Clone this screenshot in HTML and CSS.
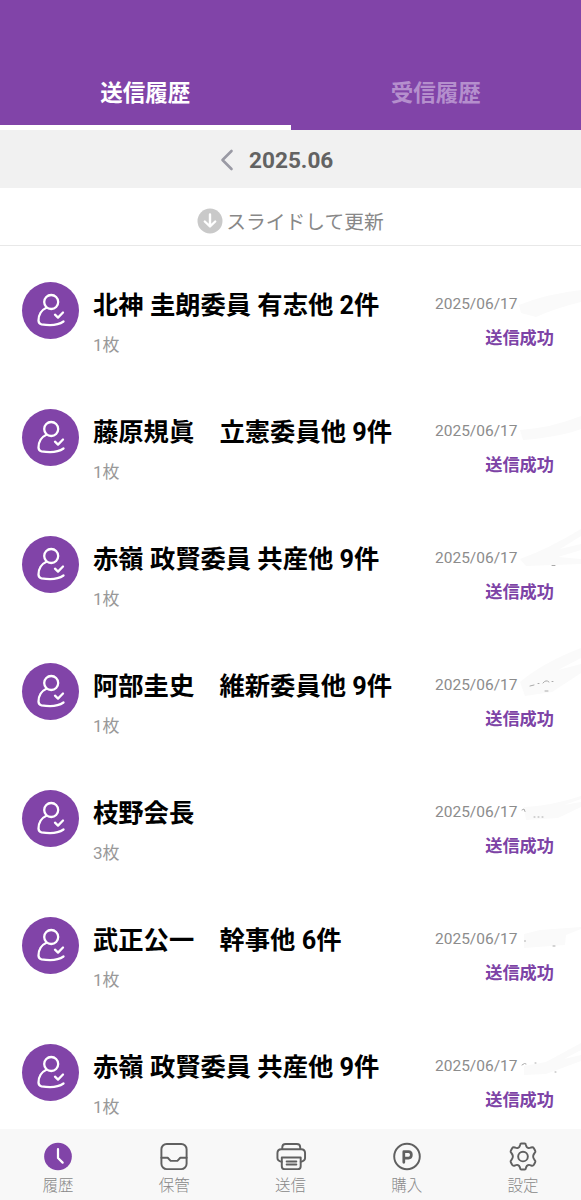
FILE: index.html
```html
<!DOCTYPE html>
<html lang="ja">
  <head>
    <meta charset="utf-8">
    <title>送信履歴</title>
    <link rel="stylesheet" href="styles.css">
  </head>
  <body>
    <svg class="defs">
      <symbol id="icon-user" viewBox="0 0 57 57">
        <circle cx="29.200" cy="20" r="7" />
        <path d="M24 26C19.500 28 16.500 33 16.500 38.500Q16.500 41.700 19.500 42.300C28 43.800 36 43.300 41.500 39.500" />
        <path d="M33 32.700L36 35.600L41 30.500" />
      </symbol>
    </svg>

    <header class="tabs">
      <div class="tab active">送信履歴</div>
      <div class="tab">受信履歴</div>
    </header>

    <div class="month-bar">
      <svg class="prev" viewBox="0 0 14 22"><path d="M11.500 2L2.500 11L11.500 20" /></svg>
      <span class="month">2025.06</span>
    </div>

    <div class="refresh">
      <svg class="refresh-icon" viewBox="0 0 26 26">
        <circle cx="13" cy="13" r="12.500" />
        <path d="M13 6.500V18M7.800 13.500L13 18.500L18.200 13.500" />
      </svg>
      <span>スライドして更新</span>
    </div>

    <main class="list">
      <div class="item">
        <svg class="avatar"><use href="#icon-user" /></svg>
        <div class="info">
          <div class="name">北神 圭朗委員 有志他 2件</div>
          <div class="pages">1枚</div>
        </div>
        <div class="status">
          <div class="date">2025/06/17</div>
          <div class="result">送信成功</div>
        </div>
        <svg class="smudge" viewBox="0 0 65 60"><path d="M3 28Q30 17 65 13V25Q40 31 20 40L5 36Z" /></svg>
      </div>
      <div class="item">
        <svg class="avatar"><use href="#icon-user" /></svg>
        <div class="info">
          <div class="name">藤原規眞　立憲委員他 9件</div>
          <div class="pages">1枚</div>
        </div>
        <div class="status">
          <div class="date">2025/06/17</div>
          <div class="result">送信成功</div>
        </div>
        <svg class="smudge" viewBox="0 0 65 60"><path d="M4 26Q35 24 65 12V25Q44 33 7 36Z" /></svg>
      </div>
      <div class="item">
        <svg class="avatar"><use href="#icon-user" /></svg>
        <div class="info">
          <div class="name">赤嶺 政賢委員 共産他 9件</div>
          <div class="pages">1枚</div>
        </div>
        <div class="status">
          <div class="date">2025/06/17</div>
          <div class="result">送信成功</div>
        </div>
        <svg class="smudge" viewBox="0 0 65 60">
          <path d="M4 28Q32 18 65 -2V5L44 18L65 13V19L42 26L65 28V33L10 35Z" />
          <path class="ink" d="M36 34.500H39" />
        </svg>
      </div>
      <div class="item">
        <svg class="avatar"><use href="#icon-user" /></svg>
        <div class="info">
          <div class="name">阿部圭史　維新委員他 9件</div>
          <div class="pages">1枚</div>
        </div>
        <div class="status">
          <div class="date">2025/06/17</div>
          <div class="result">送信成功</div>
        </div>
        <svg class="smudge" viewBox="0 0 65 60">
          <path d="M4 24Q28 4 65 -10V0L42 12L65 6V15L36 34L9 38Z" />
          <path class="ink" d="M14 28L18 27M22 25.500H23M27 25Q30 21 33 24M36 23.500H37M29 33H32" />
        </svg>
      </div>
      <div class="item">
        <svg class="avatar"><use href="#icon-user" /></svg>
        <div class="info">
          <div class="name">枝野会長</div>
          <div class="pages">3枚</div>
        </div>
        <div class="status">
          <div class="date">2025/06/17</div>
          <div class="result">送信成功</div>
        </div>
        <svg class="smudge" viewBox="0 0 65 60">
          <path d="M8 22Q35 21 65 11V14L48 20L65 17V22L42 33L10 35Z" />
          <path class="ink" d="M6 25L8 24L9 26.500M18 32H19M22 32H23M26 32H27" />
        </svg>
      </div>
      <div class="item">
        <svg class="avatar"><use href="#icon-user" /></svg>
        <div class="info">
          <div class="name">武正公一　幹事他 6件</div>
          <div class="pages">1枚</div>
        </div>
        <div class="status">
          <div class="date">2025/06/17</div>
          <div class="result">送信成功</div>
        </div>
        <svg class="smudge" viewBox="0 0 65 60">
          <path d="M8 22L24 18L65 15V17L50 23L49 33L8 36Z" />
          <path class="ink" d="M8.500 29H9.500M37 34H39" />
        </svg>
      </div>
      <div class="item">
        <svg class="avatar"><use href="#icon-user" /></svg>
        <div class="info">
          <div class="name">赤嶺 政賢委員 共産他 9件</div>
          <div class="pages">1枚</div>
        </div>
        <div class="status">
          <div class="date">2025/06/17</div>
          <div class="result">送信成功</div>
        </div>
        <svg class="smudge" viewBox="0 0 65 60">
          <path d="M8 27L30 23L65 4V11L48 20L65 16V22L30 35L8 36Z" />
          <path class="ink" d="M6 26L8.500 24.500L10 25M19 24H20M39 33H40" />
        </svg>
      </div>
    </main>

    <nav class="bottom-nav">
      <div class="nav-item">
        <svg class="nav-icon" viewBox="0 0 32 32">
          <circle class="clock" cx="16" cy="16" r="14.300" />
          <path class="hand" d="M16 8.500V17.500L20.800 22.300" />
        </svg>
        <span>履歴</span>
      </div>
      <div class="nav-item">
        <svg class="nav-icon" viewBox="0 0 32 32">
          <rect x="3" y="3" width="26" height="26" rx="5.500" />
          <path d="M3 17.300H9.500L12.500 20.500H19.500L22.500 17.300H29" />
        </svg>
        <span>保管</span>
      </div>
      <div class="nav-item">
        <svg class="nav-icon" viewBox="0 0 32 32">
          <path d="M7 8V6.500Q7 3 10.500 3H22Q25.500 3 25.500 6.500V8" />
          <path d="M6.500 21.500Q2 20.500 2 17.500V12.500Q2 8.500 6 8.500H26.500Q30.500 8.500 30.500 12.500V17.500Q30.500 20.500 26 21.500" />
          <path d="M6.500 17H26V26Q26 29 23 29H9.500Q6.500 29 6.500 26Z" />
          <path d="M11.500 21.200H21.500M11.500 24.200H21.500" />
        </svg>
        <span>送信</span>
      </div>
      <div class="nav-item">
        <svg class="nav-icon" viewBox="0 0 32 32">
          <circle cx="16" cy="16" r="13.200" />
          <path class="point" d="M12.700 22V11H17.500Q20.500 11 20.500 14.300Q20.500 17.600 17.500 17.600H12.700" />
        </svg>
        <span>購入</span>
      </div>
      <div class="nav-item">
        <svg class="nav-icon" viewBox="0 0 32 32">
          <circle cx="16" cy="16" r="5" />
          <path d="M14.300 2.500H17.700Q18.800 2.500 19 4Q19.500 7 21.600 7.300Q22.800 7.500 24.500 6.700Q26.300 6 27.200 7.500L28.600 10Q29.300 11.200 28 12.400Q24.800 16 28 19.600Q29.300 20.800 28.600 22L27.200 24.500Q26.300 26 24.500 25.300Q22.800 24.500 21.600 24.700Q19.500 25 19 28Q18.800 29.500 17.700 29.500H14.300Q13.200 29.500 13 28Q12.500 25 10.400 24.700Q9.200 24.500 7.500 25.300Q5.700 26 4.800 24.500L3.400 22Q2.700 20.800 4 19.600Q7.200 16 4 12.400Q2.700 11.200 3.400 10L4.800 7.500Q5.700 6 7.500 6.700Q9.200 7.500 10.400 7.300Q12.500 7 13 4Q13.200 2.500 14.300 2.500Z" />
        </svg>
        <span>設定</span>
      </div>
    </nav>
  </body>
</html>
```

FILE: styles.css
```css
* {
  box-sizing: border-box;
}
body {
  margin: 0;
  height: 1200px;
  display: flex;
  flex-direction: column;
  overflow: hidden;
  background-color: #fff;
  font-family: Roboto, "Noto Sans CJK JP", sans-serif;
}
svg {
  fill: none;
  stroke-linecap: round;
  stroke-linejoin: round;
}
.defs {
  display: none;
}

.tabs {
  display: flex;
  flex: none;
  height: 130px;
  background-color: #8144a8;
}
.tab {
  flex: 1;
  padding-top: 77px;
  text-align: center;
  font-size: 22.5px;
  line-height: 33px;
  font-weight: bold;
  color: #b58fcd;
}
.tab.active {
  color: #fff;
  border-bottom: 5px solid #fff;
}

.month-bar {
  display: flex;
  flex: none;
  align-items: center;
  height: 58px;
  padding-top: 2px;
  padding-left: 220px;
  background-color: #f1f1f1;
}
.prev {
  width: 14px;
  height: 22px;
  margin-right: 15px;
  stroke: #9a9aa4;
  stroke-width: 2.6;
}
.month {
  font-size: 22.6px;
  font-weight: bold;
  color: #636363;
  padding-top: 1px;
}

.refresh {
  display: flex;
  flex: none;
  align-items: center;
  justify-content: center;
  gap: 3px;
  height: 58px;
  padding-top: 8px;
  border-bottom: 1px solid #e8e8e8;
  font-size: 19.8px;
  color: #888;
}
.refresh-icon {
  width: 26px;
  height: 26px;
  stroke: #fff;
  stroke-width: 2.4;
}
.refresh-icon circle {
  fill: #c9c9c9;
  stroke: none;
}

.list {
  flex: 1;
  min-height: 0;
  overflow: hidden;
}
.item {
  position: relative;
  display: flex;
  height: 127px;
  padding: 36px 27px 0 22px;
}
.avatar {
  width: 57px;
  height: 57px;
  border-radius: 50%;
  background-color: #8144a8;
  stroke: #fff;
  stroke-width: 2.3;
}
.info {
  flex: 1;
  padding-left: 14px;
}
.name {
  margin-top: 6px;
  font-size: 25.3px;
  line-height: 36px;
  font-weight: bold;
  color: #000;
  white-space: nowrap;
}
.pages {
  margin-top: 8px;
  font-size: 17px;
  line-height: 26px;
  color: #999;
}
.status {
  width: 119px;
}
.date {
  margin-top: 11px;
  font-size: 15.5px;
  line-height: 22px;
  color: #8c8c8c;
}
.result {
  margin-top: 10px;
  text-align: right;
  font-size: 17.2px;
  line-height: 26px;
  font-weight: bold;
  color: #7d43a6;
}
/* erased time next to the date */
.smudge {
  position: absolute;
  top: 31px;
  right: 0;
  width: 65px;
  height: 60px;
  overflow: visible;
  fill: #fafafa;
}
.smudge .ink {
  fill: none;
  stroke: #aaa;
  stroke-width: 1;
}

.bottom-nav {
  display: flex;
  flex: none;
  height: 71px;
  background-color: #f8f8f8;
}
.nav-item {
  flex: 1;
  display: flex;
  flex-direction: column;
  align-items: center;
  padding-top: 12px;
  font-size: 15.5px;
  line-height: 28px;
  font-weight: 300;
  color: #888;
}
.nav-icon {
  width: 32px;
  height: 32px;
  stroke: #606060;
  stroke-width: 2;
}
.nav-icon .clock {
  fill: #8144a8;
  stroke: none;
}
.nav-icon .hand {
  stroke: #fff;
  stroke-width: 2.3;
}
.nav-icon .point {
  stroke-width: 2.8;
}
```
